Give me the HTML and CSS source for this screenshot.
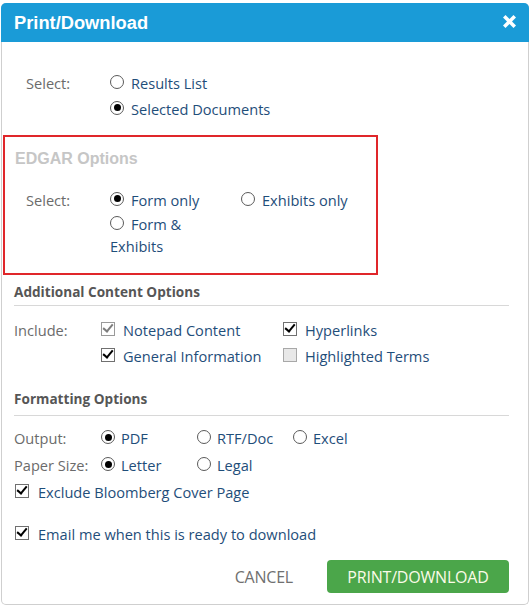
FILE: index.html
```html
<!DOCTYPE html>
<html>
<head>
<meta charset="utf-8">
<link rel="stylesheet" href="styles.css">
</head>
<body>
<div class="dialog">
  <div class="header">
    <span class="title">Print/Download</span>
    <svg class="close" width="15" height="15" viewBox="0 0 15 15"><path d="M1 3.5 L3.5 1 L7.5 5 L11.5 1 L14 3.5 L10 7.5 L14 11.5 L11.5 14 L7.5 10 L3.5 14 L1 11.5 L5 7.5 Z" fill="#fff"/></svg>
  </div>
  <div class="body">
    <div class="row indent">
      <span class="label">Select:</span>
      <div class="col">
        <div class="opt"><span class="radio"></span>Results List</div>
        <div class="opt"><span class="radio on"></span>Selected Documents</div>
      </div>
    </div>

    <div class="edgar">
      <h3 class="edgar-title">EDGAR Options</h3>
      <div class="row indent">
        <span class="label">Select:</span>
        <div class="egrid">
          <div class="opt"><span class="radio on"></span>Form only</div>
          <div class="opt"><span class="radio"></span>Exhibits only</div>
          <div class="opt wrap"><span class="radio"></span>Form &amp; Exhibits</div>
        </div>
      </div>
    </div>

    <h4 class="section first">Additional Content Options</h4>
    <div class="row">
      <span class="label">Include:</span>
      <div class="cgrid">
        <div class="opt"><span class="check dis"></span>Notepad Content</div>
        <div class="opt"><span class="check on"></span>Hyperlinks</div>
        <div class="opt"><span class="check on"></span>General Information</div>
        <div class="opt"><span class="check off"></span>Highlighted Terms</div>
      </div>
    </div>

    <h4 class="section second">Formatting Options</h4>
    <div class="fmt">
      <div class="row frow">
        <span class="label">Output:</span>
        <div class="ogrid">
          <div class="opt"><span class="radio on"></span>PDF</div>
          <div class="opt"><span class="radio"></span>RTF/Doc</div>
          <div class="opt"><span class="radio"></span>Excel</div>
        </div>
      </div>
      <div class="row frow">
        <span class="label">Paper Size:</span>
        <div class="ogrid">
          <div class="opt"><span class="radio on"></span>Letter</div>
          <div class="opt"><span class="radio"></span>Legal</div>
        </div>
      </div>
      <div class="opt solo"><span class="check on"></span>Exclude Bloomberg Cover Page</div>
    </div>
    <div class="opt solo email"><span class="check on"></span>Email me when this is ready to download</div>

    <div class="actions">
      <span class="cancel">CANCEL</span>
      <span class="primary">PRINT/DOWNLOAD</span>
    </div>
  </div>
</div>
</body>
</html>
```
FILE: styles.css
```css
html, body {
  margin: 0;
  padding: 0;
  background: #fff;
}
body {
  font-family: "Open Sans", "Liberation Sans", sans-serif;
  font-size: 14.6px;
  color: #1f4e7a;
}
.dialog {
  margin: 3px 0 0 1px;
  width: 528px;
  height: 602px;
  box-sizing: border-box;
  border-left: 1px solid #cfcfcf;
  border-right: 1px solid #cfcfcf;
  border-bottom: 1px solid #cfcfcf;
  border-radius: 5px;
  background: #fff;
}
.header {
  height: 39px;
  margin: 0 -1px;
  background: #1a9bd7;
  border-radius: 5px 5px 0 0;
  display: flex;
  align-items: center;
  justify-content: space-between;
  padding: 0 12px 0 13px;
}
.title {
  font-family: "Liberation Sans", Arial, sans-serif;
  font-weight: bold;
  font-size: 18.3px;
  color: #fff;
}
.close {
  display: block;
  margin-top: -2px;
}
.body {
  padding: 28px 19px 0 12px;
}
.row {
  display: flex;
  align-items: flex-start;
}
.indent {
  padding-left: 12px;
}
.label {
  width: 87px;
  flex: none;
  color: #6b6b6b;
  line-height: 26px;
}
.indent .label {
  width: 84px;
}
.col {
  display: flex;
  flex-direction: column;
}
.opt {
  line-height: 26px;
  white-space: nowrap;
  display: flex;
  align-items: center;
}
.radio {
  width: 14px;
  height: 14px;
  border: 1px solid #5a5a5a;
  border-radius: 50%;
  box-sizing: border-box;
  background: #fff;
  margin: -3px 6px 0 0;
  flex: none;
  position: relative;
  display: inline-block;
}
.indent .radio {
  margin-right: 7px;
}
.radio.on::after {
  content: "";
  position: absolute;
  left: 2.5px;
  top: 2.5px;
  width: 7px;
  height: 7px;
  border-radius: 50%;
  background: #000;
}
.check {
  width: 14px;
  height: 14px;
  border: 1px solid #707070;
  box-sizing: border-box;
  background: #fff;
  margin: -3px 8px 0 0;
  flex: none;
  position: relative;
  display: inline-block;
}
.check.on::after,
.check.dis::after {
  content: "";
  position: absolute;
  left: 3px;
  top: -1px;
  width: 4px;
  height: 8px;
  border-right: 2.5px solid #000;
  border-bottom: 2.5px solid #000;
  transform: rotate(40deg);
}
.check.dis {
  border-color: #9a9a9a;
}
.check.dis::after {
  border-color: #7d7d7d;
}
.check.off {
  background: #e8e8e8;
  border-color: #a8a8a8;
}

.edgar {
  margin: 13px 0 0 -11px;
  width: 375px;
  height: 140px;
  box-sizing: border-box;
  border: 2px solid #e0262a;
  padding: 12px 0 0 10px;
}
.edgar-title {
  margin: 0 0 20px;
  font-family: "Liberation Sans", Arial, sans-serif;
  font-size: 16px;
  font-weight: bold;
  line-height: 20px;
  color: #c6c6c6;
}
.edgar .indent {
  padding-left: 11px;
}
.edgar .label {
  line-height: 22px;
}
.egrid {
  display: grid;
  grid-template-columns: 109px auto;
  column-gap: 22px;
  row-gap: 2px;
}
.egrid .opt {
  line-height: 22px;
}
.egrid .opt.wrap {
  display: block;
  white-space: normal;
  width: 90px;
}
.egrid .opt.wrap .radio {
  vertical-align: middle;
  margin-top: -6px;
}

.section {
  margin: 0;
  font-size: 13.6px;
  font-weight: bold;
  color: #565656;
  line-height: 20px;
  border-bottom: 1px solid #d8d8d8;
}
.section.first {
  margin-top: 7px;
  padding-bottom: 3px;
  margin-bottom: 11px;
}
.section.second {
  margin-top: 20px;
  padding-bottom: 6px;
  margin-bottom: 9px;
}
.cgrid {
  display: grid;
  grid-template-columns: 182px auto;
}
.ogrid {
  display: grid;
  grid-template-columns: 96px 96px auto;
}
.frow .label,
.frow .opt {
  line-height: 27px;
}
.solo {
  line-height: 26px;
}
.solo .check {
  margin-left: 1px;
  margin-right: 9px;
}
.email {
  margin-top: 16px;
}
.actions {
  display: flex;
  justify-content: flex-end;
  align-items: center;
  margin-top: 13px;
}
.cancel {
  color: #707070;
  font-size: 16px;
  margin-right: 34px;
  letter-spacing: -0.2px;
}
.primary {
  width: 182px;
  height: 33px;
  box-sizing: border-box;
  background: #4ba64a;
  color: #fbfbe8;
  border-radius: 4px;
  display: flex;
  align-items: center;
  justify-content: center;
  font-size: 16px;
  letter-spacing: -0.2px;
}
```
